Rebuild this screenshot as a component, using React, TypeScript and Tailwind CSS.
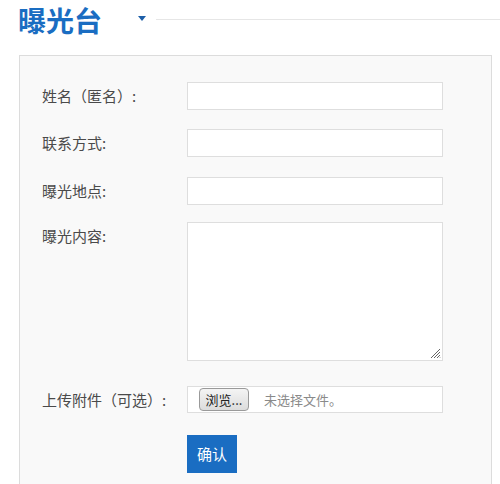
import React from "react";

const font = { fontFamily: '"Noto Sans CJK SC", "Noto Sans", sans-serif' };

function Row({ label, children, className }: { label: string; children: React.ReactNode; className?: string }) {
  return (
    <div className={"flex " + (className ?? "")}>
      <div className="w-[145px] shrink-0 text-[15px] leading-[28px] text-[#4a4a4a]">{label}</div>
      {children}
    </div>
  );
}

export default function App() {
  return (
    <div className="w-[500px] h-[484px] overflow-hidden bg-white" style={font}>
      <div className="flex items-center h-[40px] pl-[18px]">
        <div className="text-[28px] font-bold leading-[40px] text-[#1a6dc2]">曝光台</div>
        <div className="ml-[36px] w-0 h-0 border-l-[4px] border-r-[4px] border-t-[5px] border-l-transparent border-r-transparent border-t-[#1d5fa8] -mt-[3px]" />
        <div className="ml-[10px] flex-1 h-px bg-[#e6e6e6] -mt-[2px]" />
      </div>
      <div className="ml-[19px] mt-[15px] w-[473px] h-[500px] border border-[#dcdcdc] bg-[#f9f9f9] pl-[22px] pt-[26px]">
        <Row label="姓名（匿名）:" className="mb-[19px]">
          <div className="w-[256px] h-[28px] border border-[#dedede] bg-white" />
        </Row>
        <Row label="联系方式:" className="mb-[20px]">
          <div className="w-[256px] h-[28px] border border-[#dedede] bg-white" />
        </Row>
        <Row label="曝光地点:" className="mb-[17px]">
          <div className="w-[256px] h-[28px] border border-[#dedede] bg-white" />
        </Row>
        <Row label="曝光内容:" className="mb-[25px]">
          <div className="relative w-[256px] h-[139px] border border-[#dedede] bg-white">
            <svg className="absolute right-[1px] bottom-[1px]" width="12" height="12" viewBox="0 0 12 12">
              <path d="M11 2 L2 11 M11 5 L5 11 M11 8 L8 11 M11 10.5 L10.5 11" stroke="#666" strokeWidth="1" fill="none" />
            </svg>
          </div>
        </Row>
        <Row label="上传附件（可选）:" className="mb-[21px]">
          <div className="w-[256px] h-[27px] border border-[#dedede] bg-white flex items-center pl-[11px]">
            <div className="h-[23px] w-[50px] rounded-[4px] border border-[#9a9a9a] bg-gradient-to-b from-[#f4f4f4] to-[#dcdcdc] text-[13px] leading-[21px] text-[#222] text-center">
              浏览...
            </div>
            <div className="ml-[15px] text-[13px] text-[#8a8a8a]">未选择文件。</div>
          </div>
        </Row>
        <div className="flex">
          <div className="w-[145px] shrink-0" />
          <div className="w-[50px] h-[38px] bg-[#1a6dc2] text-white text-[15px] leading-[38px] text-center">确认</div>
        </div>
      </div>
    </div>
  );
}
